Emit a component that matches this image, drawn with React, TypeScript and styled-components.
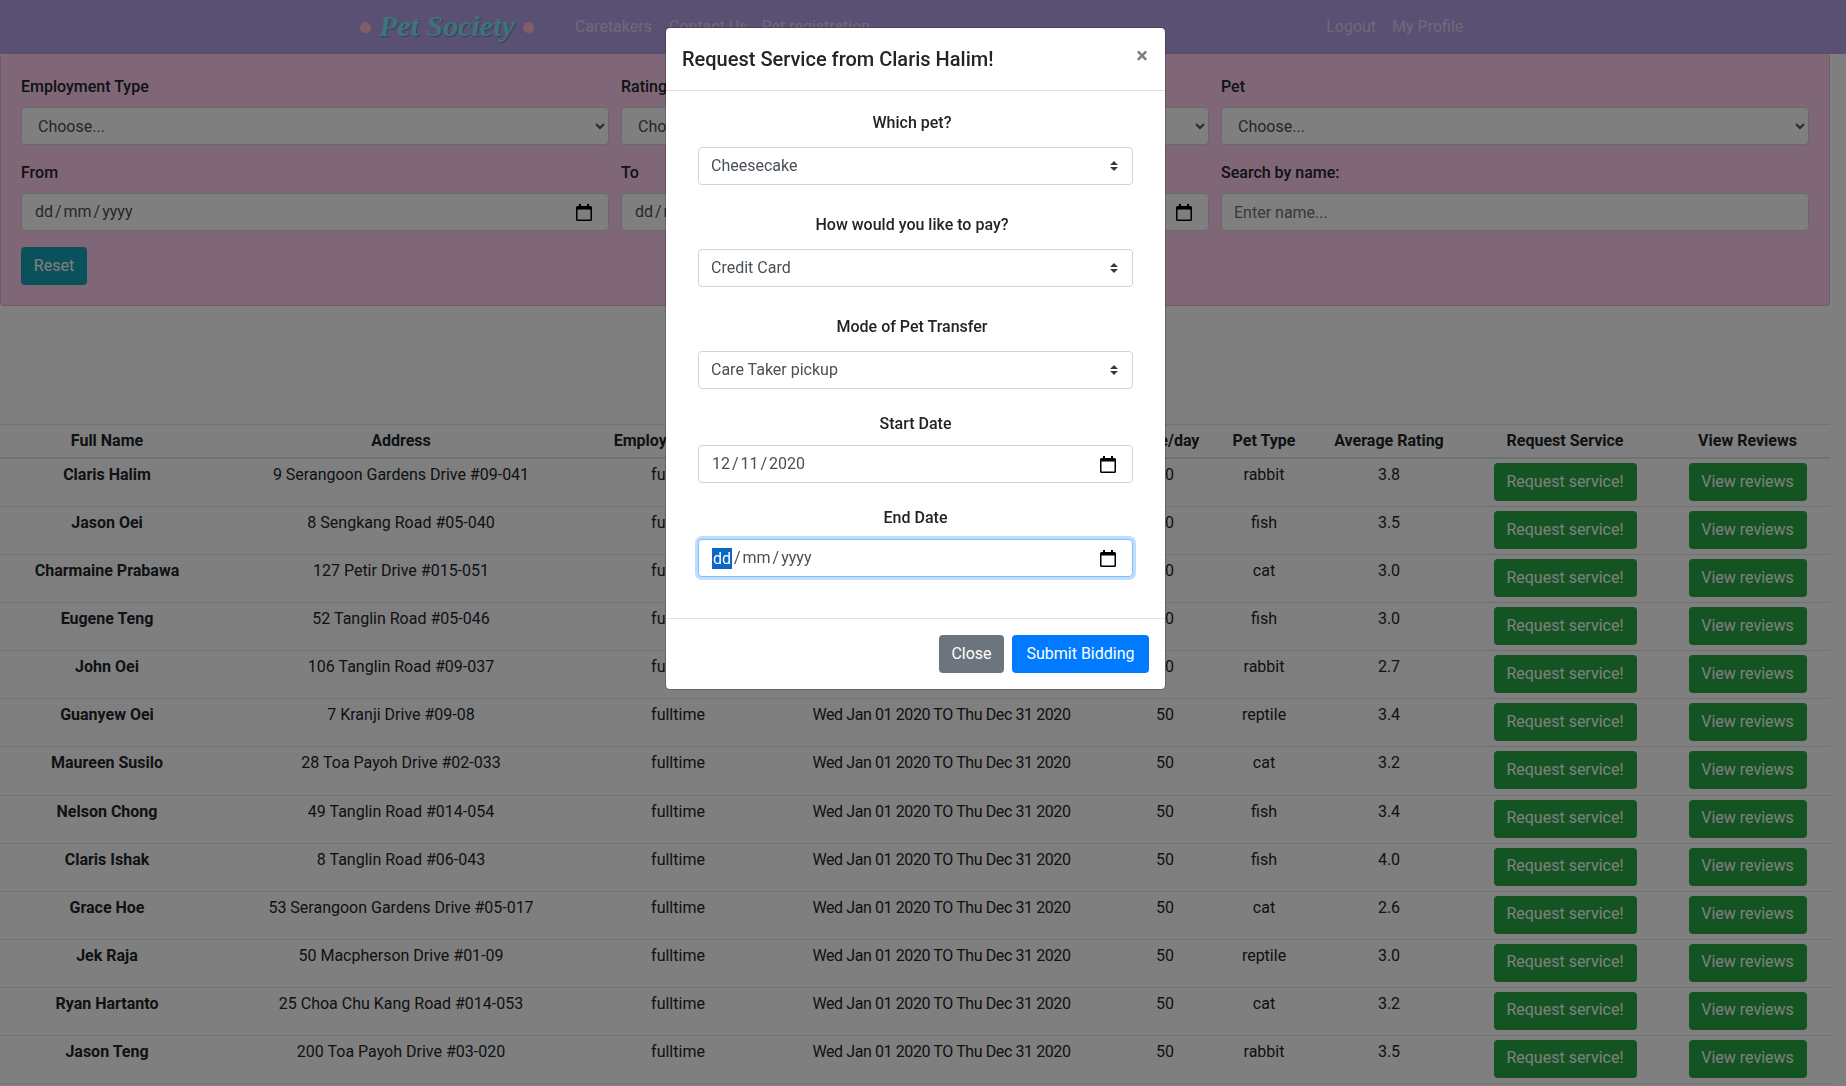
import React from 'react';
import styled, { createGlobalStyle, css } from 'styled-components';

const FONT = 'Roboto, "Noto Sans", sans-serif';

const GlobalStyle = createGlobalStyle`
  html, body {
    margin: 0;
    height: 1086px;
    overflow: hidden;
    background: #fff;
    font-family: ${FONT};
    font-size: 16px;
    line-height: 24px;
    color: #212529;
  }
  * { box-sizing: border-box; }
`;

const Page = styled.div`
  width: 1830px;
`;

const Navbar = styled.nav`
  height: 54px;
  background: #b5a1e6;
  display: flex;
  align-items: center;
  padding-left: 360px;
  width: 1846px;
`;

const Logo = styled.div`
  display: flex;
  align-items: center;
  gap: 8px;
  width: 215px;
`;

const LogoDot = styled.span`
  width: 11px;
  height: 11px;
  border-radius: 50%;
  background: #ffbcd2;
`;

const LogoText = styled.span`
  font-family: "Liberation Serif", serif;
  font-style: italic;
  font-weight: 700;
  font-size: 30px;
  line-height: 40px;
  padding-bottom: 2px;
  color: #7ce6fa;
  text-shadow: 1px 1px 1px rgba(40, 120, 135, 0.6);
`;

const NavLink = styled.a<{ $gap?: number }>`
  color: rgba(255, 255, 255, 0.55);
  font-size: 16px;
  margin-right: ${(p) => p.$gap ?? 17}px;
`;

const NavRight = styled.div`
  display: flex;
  margin-left: 439px;
`;

const FilterCard = styled.section`
  height: 252px;
  margin-bottom: 118px;
  padding: 21px 20px;
  background: #ffcef1;
  border: 1px solid rgba(0, 0, 0, 0.125);
  border-top: 0;
  border-radius: 4px;
`;

const FilterGrid = styled.div`
  display: grid;
  grid-template-columns: repeat(3, 588px);
  column-gap: 12px;
  row-gap: 16px;
`;

const FilterLabel = styled.label`
  display: block;
  font-weight: 500;
  margin-bottom: 8px;
`;

const fieldBase = css`
  display: block;
  width: 100%;
  height: 38px;
  font-family: ${FONT};
  font-size: 16px;
  color: #495057;
  background-color: #fff;
  border: 1px solid #ced4da;
  border-radius: 4px;
`;

const FilterSelect = styled.select`
  ${fieldBase}
  padding: 0 8px 0 12px;
`;

const TextInput = styled.input`
  ${fieldBase}
  padding: 0 12px;
  &::placeholder { color: #6c757d; }
`;

const DateBox = styled.div<{ $focused?: boolean }>`
  ${fieldBase}
  display: flex;
  align-items: center;
  justify-content: space-between;
  padding: 0 16px 0 13px;
  ${(p) =>
    p.$focused &&
    css`
      border-color: #80bdff;
      box-shadow: 0 0 0 3px rgba(0, 123, 255, 0.25);
    `}
`;

const DateValue = styled.span`
  word-spacing: -2px;
  display: flex;
  align-items: center;
  height: 22px;
  white-space: pre;
`;

const DateSegment = styled.span`
  background: #0a66c8;
  color: #fff;
  height: 21px;
  line-height: 21px;
  padding: 0 1px;
`;

const ResetButton = styled.button`
  display: block;
  margin-top: 16px;
  width: 66px;
  height: 38px;
  padding: 0 0 2px;
  border: 0;
  border-radius: 4px;
  background: #17a2b8;
  color: #fff;
  font-family: ${FONT};
  font-size: 16px;
`;

const Table = styled.table`
  width: 1830px;
  table-layout: fixed;
  border-collapse: separate;
  border-spacing: 0;
  text-align: center;
`;

const HeadCell = styled.th`
  height: 35px;
  padding: 0;
  font-weight: 700;
  border-top: 1px solid #dee2e6;
  border-bottom: 2px solid #dee2e6;
`;

const Row = styled.tr`
  height: 48.08px;
`;

const Cell = styled.td<{ $strong?: boolean; $tight?: boolean }>`
  padding: 4px 0 0;
  vertical-align: top;
  font-weight: ${(p) => (p.$strong ? 700 : 400)};
  letter-spacing: ${(p) => (p.$tight ? '-0.4px' : 'normal')};
  border-bottom: 1px solid #dee2e6;
`;

const GreenButton = styled.button<{ $width: number }>`
  display: inline-block;
  width: ${(p) => p.$width}px;
  height: 38px;
  padding: 0 0 2px;
  border: 0;
  border-radius: 4px;
  background: #28a745;
  color: #fff;
  font-family: ${FONT};
  font-size: 16px;
`;

const Backdrop = styled.div`
  position: fixed;
  inset: 0;
  background: rgba(0, 0, 0, 0.5);
`;

const Modal = styled.div`
  position: fixed;
  left: 665px;
  top: 27px;
  width: 501px;
  height: 663px;
  display: flex;
  flex-direction: column;
  background: #fff;
  border: 1px solid rgba(0, 0, 0, 0.2);
  border-radius: 5px;
  background-clip: padding-box;
`;

const ModalHeader = styled.header`
  height: 63px;
  padding: 16px 16px 0;
  display: flex;
  justify-content: space-between;
  border-bottom: 1px solid #dee2e6;
`;

const ModalTitle = styled.h5`
  margin: 0;
  font-size: 20px;
  font-weight: 500;
  line-height: 30px;
`;

const CloseX = styled.button`
  align-self: flex-start;
  margin: -3px 0 0;
  padding: 0 1px;
  border: 0;
  background: none;
  font-family: ${FONT};
  font-size: 22px;
  line-height: 30px;
  font-weight: 700;
  color: #000;
  opacity: 0.5;
`;

const ModalBody = styled.div`
  flex: 1;
  padding: 20px 32px 0;
`;

const Group = styled.div<{ $dateField?: boolean }>`
  margin-bottom: ${(p) => (p.$dateField ? 23 : 28)}px;
`;

const GroupLabel = styled.label<{ $dateField?: boolean }>`
  display: block;
  text-align: center;
  font-weight: 500;
  margin-bottom: ${(p) => (p.$dateField ? 9 : 12)}px;
  padding-right: ${(p) => (p.$dateField ? 0 : 7)}px;
`;

const CustomSelect = styled.select`
  ${fieldBase}
  appearance: none;
  padding: 0 28px 2px 12px;
  background-image: url("data:image/svg+xml,%3csvg xmlns='http://www.w3.org/2000/svg' width='4' height='5' viewBox='0 0 4 5'%3e%3cpath fill='%23343a40' d='M2 0L0 2h4zm0 5L0 3h4z'/%3e%3c/svg%3e");
  background-repeat: no-repeat;
  background-position: right 14px center;
  background-size: 8px 10px;
`;

const ModalFooter = styled.footer`
  height: 71px;
  padding: 16px;
  display: flex;
  justify-content: flex-end;
  gap: 8px;
  border-top: 1px solid #dee2e6;
`;

const FooterButton = styled.button<{ $primary?: boolean; $width: number }>`
  width: ${(p) => p.$width}px;
  height: 38px;
  padding: 0 0 2px;
  border: 0;
  border-radius: 4px;
  background: ${(p) => (p.$primary ? '#007bff' : '#6c757d')};
  color: #fff;
  font-family: ${FONT};
  font-size: 16px;
`;

const CalendarIcon = () => (
  <svg width="16" height="17" viewBox="0 0 16 17">
    <path
      fill="#000"
      fillRule="evenodd"
      d="M3 0h2v2h6V0h2v2h1.500A1.500 1.500 0 0 1 16 3.500V15.500A1.500 1.500 0 0 1 14.500 17h-13A1.500 1.500 0 0 1 0 15.500V3.500A1.500 1.500 0 0 1 1.500 2H3zM1.500 5.500v10h13v-10z"
    />
  </svg>
);

const DateField = ({ value, focused }: { value?: string; focused?: boolean }) => (
  <DateBox $focused={focused}>
    <DateValue>
      {focused ? (
        <>
          <DateSegment>dd</DateSegment>{' / mm / yyyy'}
        </>
      ) : (
        value ?? 'dd / mm / yyyy'
      )}
    </DateValue>
    <CalendarIcon />
  </DateBox>
);

const caretakers = [
  ['Claris Halim', '9 Serangoon Gardens Drive #09-041', 'rabbit', '3.8'],
  ['Jason Oei', '8 Sengkang Road #05-040', 'fish', '3.5'],
  ['Charmaine Prabawa', '127 Petir Drive #015-051', 'cat', '3.0'],
  ['Eugene Teng', '52 Tanglin Road #05-046', 'fish', '3.0'],
  ['John Oei', '106 Tanglin Road #09-037', 'rabbit', '2.7'],
  ['Guanyew Oei', '7 Kranji Drive #09-08', 'reptile', '3.4'],
  ['Maureen Susilo', '28 Toa Payoh Drive #02-033', 'cat', '3.2'],
  ['Nelson Chong', '49 Tanglin Road #014-054', 'fish', '3.4'],
  ['Claris Ishak', '8 Tanglin Road #06-043', 'fish', '4.0'],
  ['Grace Hoe', '53 Serangoon Gardens Drive #05-017', 'cat', '2.6'],
  ['Jek Raja', '50 Macpherson Drive #01-09', 'reptile', '3.0'],
  ['Ryan Hartanto', '25 Choa Chu Kang Road #014-053', 'cat', '3.2'],
  ['Jason Teng', '200 Toa Payoh Drive #03-020', 'rabbit', '3.5'],
];

const columnWidths = [214, 374, 180, 347, 100, 98, 152, 200, 165];

const App = () => (
  <>
    <GlobalStyle />
    <Page>
      <Navbar>
        <Logo>
          <LogoDot />
          <LogoText>Pet Society</LogoText>
          <LogoDot />
        </Logo>
        <NavLink>Caretakers</NavLink>
        <NavLink $gap={14}>Contact Us</NavLink>
        <NavLink>Pet registration</NavLink>
        <NavRight>
          <NavLink $gap={16}>Logout</NavLink>
          <NavLink>My Profile</NavLink>
        </NavRight>
      </Navbar>

      <FilterCard>
        <FilterGrid>
          <div>
            <FilterLabel>Employment Type</FilterLabel>
            <FilterSelect defaultValue="Choose...">
              <option>Choose...</option>
            </FilterSelect>
          </div>
          <div>
            <FilterLabel>Rating</FilterLabel>
            <FilterSelect defaultValue="Choose...">
              <option>Choose...</option>
            </FilterSelect>
          </div>
          <div>
            <FilterLabel>Pet</FilterLabel>
            <FilterSelect defaultValue="Choose...">
              <option>Choose...</option>
            </FilterSelect>
          </div>
          <div>
            <FilterLabel>From</FilterLabel>
            <DateField />
          </div>
          <div>
            <FilterLabel>To</FilterLabel>
            <DateField />
          </div>
          <div>
            <FilterLabel>Search by name:</FilterLabel>
            <TextInput placeholder="Enter name..." />
          </div>
        </FilterGrid>
        <ResetButton>Reset</ResetButton>
      </FilterCard>

      <Table>
        <colgroup>
          {columnWidths.map((w, i) => (
            <col key={i} width={w} />
          ))}
        </colgroup>
        <thead>
          <tr>
            <HeadCell>Full Name</HeadCell>
            <HeadCell>Address</HeadCell>
            <HeadCell>Employment Type</HeadCell>
            <HeadCell>Availability</HeadCell>
            <HeadCell>Price/day</HeadCell>
            <HeadCell>Pet Type</HeadCell>
            <HeadCell>Average Rating</HeadCell>
            <HeadCell>Request Service</HeadCell>
            <HeadCell>View Reviews</HeadCell>
          </tr>
        </thead>
        <tbody>
          {caretakers.map(([name, address, pet, rating]) => (
            <Row key={name}>
              <Cell $strong>{name}</Cell>
              <Cell>{address}</Cell>
              <Cell>fulltime</Cell>
              <Cell $tight>Wed Jan 01 2020 TO Thu Dec 31 2020</Cell>
              <Cell>50</Cell>
              <Cell>{pet}</Cell>
              <Cell>{rating}</Cell>
              <Cell>
                <GreenButton $width={143}>Request service!</GreenButton>
              </Cell>
              <Cell>
                <GreenButton $width={118}>View reviews</GreenButton>
              </Cell>
            </Row>
          ))}
        </tbody>
      </Table>
    </Page>

    <Backdrop />
    <Modal>
      <ModalHeader>
        <ModalTitle>Request Service from Claris Halim!</ModalTitle>
        <CloseX>×</CloseX>
      </ModalHeader>
      <ModalBody>
        <Group>
          <GroupLabel>Which pet?</GroupLabel>
          <CustomSelect defaultValue="Cheesecake">
            <option>Cheesecake</option>
          </CustomSelect>
        </Group>
        <Group>
          <GroupLabel>How would you like to pay?</GroupLabel>
          <CustomSelect defaultValue="Credit Card">
            <option>Credit Card</option>
          </CustomSelect>
        </Group>
        <Group $dateField>
          <GroupLabel>Mode of Pet Transfer</GroupLabel>
          <CustomSelect defaultValue="Care Taker pickup">
            <option>Care Taker pickup</option>
          </CustomSelect>
        </Group>
        <Group $dateField>
          <GroupLabel $dateField>Start Date</GroupLabel>
          <DateField value="12 / 11 / 2020" />
        </Group>
        <Group $dateField>
          <GroupLabel $dateField>End Date</GroupLabel>
          <DateField focused />
        </Group>
      </ModalBody>
      <ModalFooter>
        <FooterButton $width={65}>Close</FooterButton>
        <FooterButton $primary $width={137}>Submit Bidding</FooterButton>
      </ModalFooter>
    </Modal>
  </>
);

export default App;
